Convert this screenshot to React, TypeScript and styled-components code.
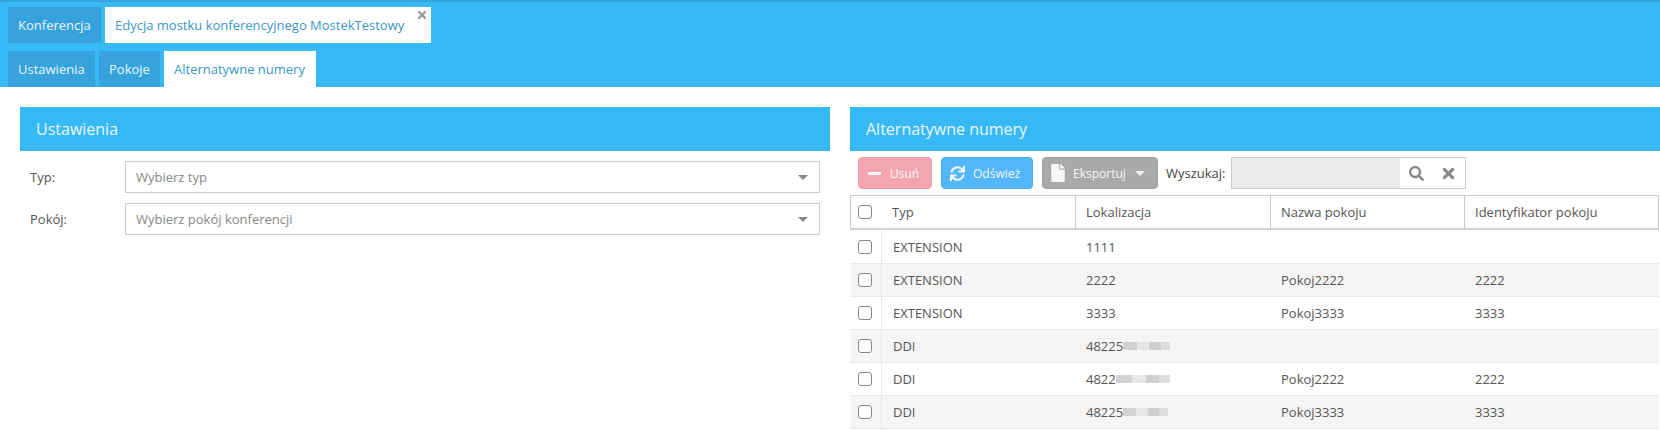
import React from "react";
import styled, { createGlobalStyle } from "styled-components";
import { FaFile, FaMinus, FaSearch, FaSync, FaTimes } from "react-icons/fa";

const Global = createGlobalStyle`
  html, body { margin: 0; padding: 0; background: #fff; }
  body { font-family: "Open Sans", "Liberation Sans", sans-serif; font-size: 13px; color: #555; overflow: hidden; }
  * { box-sizing: border-box; }
`;

const Page = styled.div`width: 1660px; height: 431px; overflow: hidden;`;
const TopBar = styled.div`
  height: 87px; background: #37b9f6; border-top: 2px solid #33a5dc;
  padding-top: 5px; display: flex; flex-direction: column; gap: 8px;
`;
const TabRow = styled.div`display: flex; gap: 4px; padding-left: 8px;`;
const Tab = styled.div<{ $active?: boolean; $w: number }>`
  position: relative; width: ${(p) => p.$w}px; height: 36px; display: flex; align-items: center;
  padding-left: 10px; font-size: 13px; white-space: nowrap;
  background: ${(p) => (p.$active ? "#fff" : "#36a3dc")};
  color: ${(p) => (p.$active ? "#3a97c9" : "#e8f4fb")};
`;
const TabClose = styled.span`
  position: absolute; top: 2px; right: 3px; color: #999; line-height: 12px; display: flex;
`;
const Content = styled.div`
  display: grid; grid-template-columns: 810px 810px; column-gap: 20px; padding: 20px 0 0 20px;
`;
const PanelHead = styled.div<{ $pad: number }>`
  height: 44px; background: #37b9f6; color: #eaf7fe; font-size: 16px; display: flex; align-items: center;
  padding-left: ${(p) => p.$pad}px;
`;
const FormRow = styled.div`display: flex; align-items: center; margin-bottom: 10px; padding-left: 10px;`;
const Form = styled.div`padding-top: 10px;`;
const Label = styled.div`width: 95px; color: #555; font-size: 13px;`;
const Select = styled.div`
  width: 695px; height: 32px; border: 1px solid #ccc; padding: 0 11px 0 10px; display: flex; align-items: center;
  justify-content: space-between; color: #888; font-size: 13px;
`;
const Caret = styled.span<{ $color?: string; $ml?: number }>`
  width: 0; height: 0; border-left: 5px solid transparent; border-right: 5px solid transparent;
  border-top: 5px solid ${(p) => p.$color ?? "#888"}; display: inline-block;
  margin-left: ${(p) => p.$ml ?? 0}px;
`;
const Toolbar = styled.div`display: flex; align-items: center; height: 32px; margin-top: 6px; padding-left: 8px;`;
const Btn = styled.div<{ $bg: string; $border: string; $w: number; $mr: number; $gap: number; $pad: number }>`
  width: ${(p) => p.$w}px; margin-right: ${(p) => p.$mr}px; height: 32px; border-radius: 4px;
  background: ${(p) => p.$bg}; border: 1px solid ${(p) => p.$border}; color: #f7f7f7; font-size: 12px;
  display: flex; align-items: center; padding-left: ${(p) => p.$pad}px; gap: ${(p) => p.$gap}px; white-space: nowrap;
`;
const SearchLabel = styled.div`font-size: 13px; color: #444; width: 65px;`;
const SearchBox = styled.div`
  width: 235px; height: 32px; border: 1px solid #ccc; display: flex; align-items: center; color: #888;
`;
const SearchInput = styled.div`width: 168px; height: 100%; background: #ebebeb;`;
const SearchIcons = styled.div`flex: 1; display: flex; align-items: center; justify-content: space-between; padding: 0 8px 0 9px;`;
const Table = styled.div`margin-top: 6px; width: 809px;`;
const HeadRow = styled.div`
  display: grid; grid-template-columns: 225px 195px 194px 195px; height: 35px;
  border: 1px solid #ccc; border-bottom: 2px solid #d2d2d2; margin-bottom: 1px;
`;
const HeadCell = styled.div<{ $first?: boolean }>`
  display: flex; align-items: center; padding-left: ${(p) => (p.$first ? "7px" : "10px")}; color: #555; font-size: 13px;
  border-right: 1px solid #ccc; gap: 20px;
  &:last-child { border-right: none; }
`;
const Row = styled.div<{ $alt?: boolean }>`
  display: grid; grid-template-columns: 32px 193px 195px 194px 195px; height: 33px; align-items: stretch;
  border-bottom: 1px solid #e8e8e8; background: ${(p) => (p.$alt ? "#f5f5f5" : "#fff")};
`;
const BodyCell = styled.div`display: flex; align-items: center; padding-left: 11px; color: #555; font-size: 13px;`;
const CheckCell = styled.div`display: flex; align-items: center; padding-left: 8px; border-right: 1px solid #e8e8e8;`;
const Check = styled.span`
  width: 14px; height: 14px; border: 1px solid #888; border-radius: 3px; background: #fff; display: inline-block; flex: none;
`;
const Blur = styled.span<{ $w: number }>`
  display: inline-block; width: ${(p) => p.$w}px; height: 8px;
  background: linear-gradient(90deg, #d2d2d2 0 30%, #e6e6e6 30% 55%, #cfcfcf 55% 80%, #dddddd 80%);
`;

const rows = [
  { t: "EXTENSION", l: "1111", n: "", i: "" },
  { t: "EXTENSION", l: "2222", n: "Pokoj2222", i: "2222" },
  { t: "EXTENSION", l: "3333", n: "Pokoj3333", i: "3333" },
  { t: "DDI", l: "48225", b: 47, n: "", i: "" },
  { t: "DDI", l: "4822", b: 54, n: "Pokoj2222", i: "2222" },
  { t: "DDI", l: "48225", b: 45, n: "Pokoj3333", i: "3333" },
];

export default function App() {
  return (
    <Page>
      <Global />
      <TopBar>
        <TabRow>
          <Tab $w={93}>Konferencja</Tab>
          <Tab $w={326} $active>
            Edycja mostku konferencyjnego MostekTestowy
            <TabClose><FaTimes size={12} /></TabClose>
          </Tab>
        </TabRow>
        <TabRow>
          <Tab $w={87}>Ustawienia</Tab>
          <Tab $w={61}>Pokoje</Tab>
          <Tab $w={152} $active>Alternatywne numery</Tab>
        </TabRow>
      </TopBar>
      <Content>
        <section>
          <PanelHead $pad={16}>Ustawienia</PanelHead>
          <Form>
            <FormRow>
              <Label>Typ:</Label>
              <Select>Wybierz typ<Caret /></Select>
            </FormRow>
            <FormRow>
              <Label>Pokój:</Label>
              <Select>Wybierz pokój konferencji<Caret /></Select>
            </FormRow>
          </Form>
        </section>
        <section>
          <PanelHead $pad={16}>Alternatywne numery</PanelHead>
          <Toolbar>
            <Btn $bg="#f3a5b0" $border="#eda0ab" $w={74} $mr={9} $gap={8} $pad={8}>
              <FaMinus size={15} /> Usuń
            </Btn>
            <Btn $bg="#52b6fb" $border="#48aef5" $w={92} $mr={9} $gap={8} $pad={8}>
              <FaSync size={15} /> Odśwież
            </Btn>
            <Btn $bg="#a9a9a9" $border="#a0a0a0" $w={116} $mr={8} $gap={6} $pad={6}>
              <FaFile size={18} /> Eksportuj <Caret $color="#eee" $ml={3} />
            </Btn>
            <SearchLabel>Wyszukaj:</SearchLabel>
            <SearchBox>
              <SearchInput />
              <SearchIcons><FaSearch size={15} /><FaTimes size={17} /></SearchIcons>
            </SearchBox>
          </Toolbar>
          <Table>
            <HeadRow>
              <HeadCell $first><Check />Typ</HeadCell>
              <HeadCell>Lokalizacja</HeadCell>
              <HeadCell>Nazwa pokoju</HeadCell>
              <HeadCell>Identyfikator pokoju</HeadCell>
            </HeadRow>
            {rows.map((r, i) => (
              <Row key={i} $alt={i % 2 === 1}>
                <CheckCell><Check /></CheckCell>
                <BodyCell>{r.t}</BodyCell>
                <BodyCell>{r.l}{r.b ? <Blur $w={r.b} /> : null}</BodyCell>
                <BodyCell>{r.n}</BodyCell>
                <BodyCell>{r.i}</BodyCell>
              </Row>
            ))}
          </Table>
        </section>
      </Content>
    </Page>
  );
}
